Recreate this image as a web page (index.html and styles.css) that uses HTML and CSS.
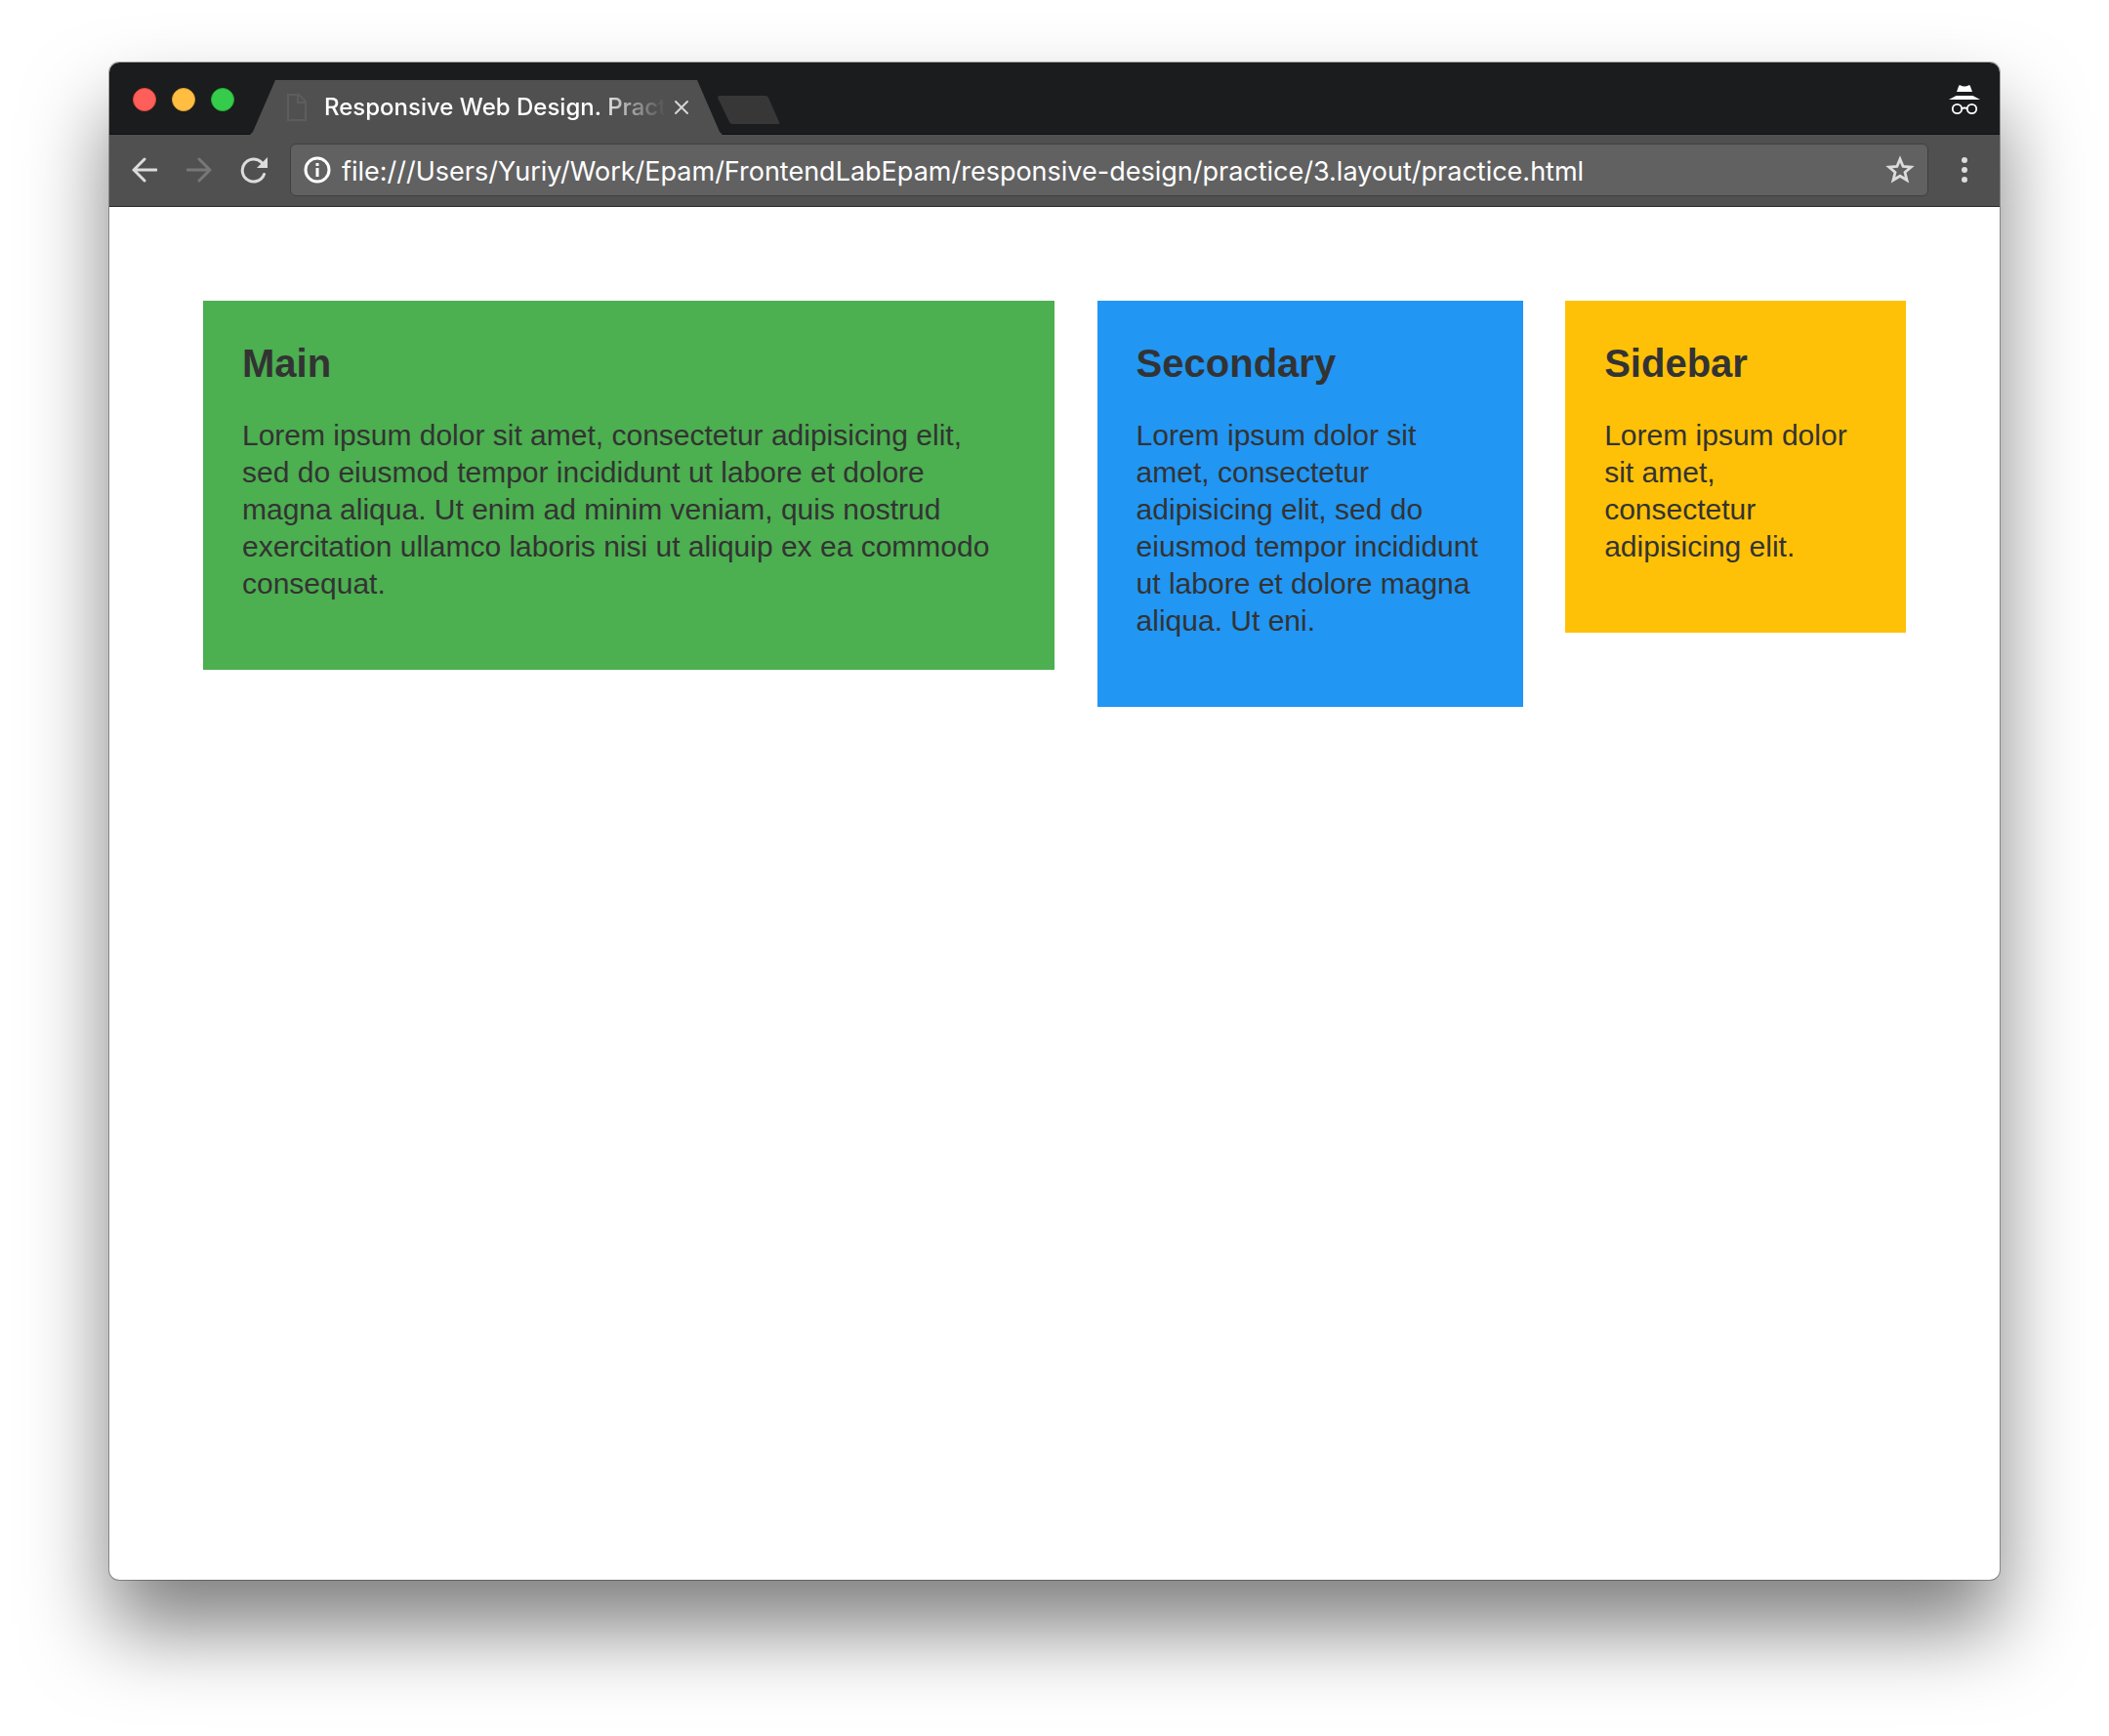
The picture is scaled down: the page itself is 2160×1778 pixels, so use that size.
FILE: index.html
```
<!DOCTYPE html>
<html lang="en">
<head>
<meta charset="utf-8">
<meta name="viewport" content="width=device-width, initial-scale=1">
<title>Responsive Web Design. Practice</title>
<link rel="stylesheet" href="styles.css">
</head>
<body>
<div class="window">
  <header class="titlebar">
    <div class="lights">
      <button class="light light-close" aria-label="Close window"></button>
      <button class="light light-minimize" aria-label="Minimize window"></button>
      <button class="light light-zoom" aria-label="Zoom window"></button>
    </div>
    <div class="tab">
      <svg class="tab-icon" width="20" height="28" viewBox="0 0 20 28" aria-hidden="true"><path d="M1 1H12L19 8V27H1ZM11 1V9H19" fill="none" stroke="#5d5d5d" stroke-width="2"/></svg>
      <span class="tab-title">Responsive Web Design. Practice</span>
      <button class="tab-close" aria-label="Close tab"><svg width="16" height="16" viewBox="0 0 16 16"><path d="M2 2L14 14M14 2L2 14" stroke="#d6d6d6" stroke-width="2" stroke-linecap="round"/></svg></button>
    </div>
    <button class="new-tab" aria-label="New tab"><svg width="64" height="30" viewBox="0 0 64 30"><path d="M2 0H49Q51 0 52 2L63 27Q64 29 62 29H15Q13 29 12 27L0 2Q0 0 2 0Z" fill="#373737"/></svg></button>
    <svg class="incognito" width="32" height="30" viewBox="0 0 32 30" role="img" aria-label="Incognito">
      <path d="M8 7L10.300 0.600Q10.600 0 11.500 0.200Q16 2.600 20.500 0.200Q21.400 0 21.700 0.600L24 7ZM0 15L7.500 11H24.500L32 15Z" fill="#fff"/>
      <circle cx="8.500" cy="24.500" r="4.700" fill="none" stroke="#fff" stroke-width="1.800"/><circle cx="23.500" cy="24.500" r="4.700" fill="none" stroke="#fff" stroke-width="1.800"/>
      <path d="M13 24.500Q16 22.500 19 24.500" fill="none" stroke="#fff" stroke-width="1.800"/>
    </svg>
  </header>
  <nav class="toolbar">
    <div class="nav-buttons">
      <button class="tool" aria-label="Back"><svg width="26" height="26" viewBox="0 0 26 26"><path d="M25 13H2M13 2L2 13L13 24" fill="none" stroke="#dcdcdc" stroke-width="3" stroke-linecap="round"/></svg></button>
      <button class="tool" aria-label="Forward" disabled><svg width="26" height="26" viewBox="0 0 26 26"><path d="M1 13H24M13 2L24 13L13 24" fill="none" stroke="#777" stroke-width="3" stroke-linecap="round"/></svg></button>
      <button class="tool" aria-label="Reload"><svg width="28" height="28" viewBox="0 0 28 28"><path d="M22 6.500A11.500 11.500 0 1 0 24.500 18.500" fill="none" stroke="#dcdcdc" stroke-width="3" stroke-linecap="round"/><path d="M28 1V12H17Z" fill="#dcdcdc"/></svg></button>
    </div>
    <form class="address">
      <svg width="28" height="28" viewBox="0 0 28 28" aria-hidden="true"><circle cx="14" cy="14" r="12" fill="none" stroke="#fff" stroke-width="3"/><path d="M12.500 7H15.500V10H12.500ZM12.500 12H15.500V21H12.500Z" fill="#fff"/></svg>
      <input class="url" type="text" aria-label="Address" value="file:///Users/Yuriy/Work/Epam/FrontendLabEpam/responsive-design/practice/3.layout/practice.html">
      <button class="star" type="button" aria-label="Bookmark this page"><svg width="30" height="30" viewBox="0 0 30 30"><path d="M15 4L18.100 11.500L26.200 12.200L20 17.500L22 25.500L15 21.200L8 25.500L10 17.500L3.800 12.200L11.900 11.500Z" fill="none" stroke="#dcdcdc" stroke-width="2.800"/></svg></button>
    </form>
    <button class="tool" aria-label="Menu"><svg width="6" height="26" viewBox="0 0 6 26"><circle cx="3" cy="3" r="3"/><circle cx="3" cy="13" r="3"/><circle cx="3" cy="23" r="3"/></svg></button>
  </nav>
  <main class="layout">
    <section class="box box-main">
      <h2>Main</h2>
      <p>Lorem ipsum dolor sit amet, consectetur adipisicing elit, sed do eiusmod tempor incididunt ut labore et dolore magna aliqua. Ut enim ad minim veniam, quis nostrud exercitation ullamco laboris nisi ut aliquip ex ea commodo consequat.</p>
    </section>
    <section class="box box-secondary">
      <h2>Secondary</h2>
      <p>Lorem ipsum dolor sit amet, consectetur adipisicing elit, sed do eiusmod tempor incididunt ut labore et dolore magna aliqua. Ut eni.</p>
    </section>
    <aside class="box box-sidebar">
      <h2>Sidebar</h2>
      <p>Lorem ipsum dolor sit amet, consectetur adipisicing elit.</p>
    </aside>
  </main>
</div>
</body>
</html>
```
FILE: styles.css
```
* {
  box-sizing: border-box;
}

body {
  display: flex;
  min-height: 100vh;
  margin: 0;
  padding: 64px 112px 160px;
  background: #fff;
  font-family: "Liberation Sans", Arial, sans-serif;
}

button {
  display: flex;
  align-items: center;
  justify-content: center;
  margin: 0;
  padding: 0;
  border: 0;
  background: none;
}

svg {
  display: block;
  flex: none;
}

.window {
  display: flex;
  flex: 1;
  flex-direction: column;
  min-width: 0;
  border-radius: 10px;
  background: #fff;
  box-shadow: 0 0 0 1px rgba(0, 0, 0, 0.3), 0 50px 84px rgba(0, 0, 0, 0.5);
}

.titlebar {
  display: flex;
  align-items: center;
  height: 74px;
  padding: 2px 20px 0 24px;
  border-radius: 10px 10px 0 0;
  background: linear-gradient(#1b1c1d 73px, #111 73px);
}

.lights {
  display: flex;
  gap: 16px;
  width: 120px;
}

.light {
  width: 24px;
  height: 24px;
  border: 1px solid;
  border-radius: 50%;
}

.light-close {
  border-color: #e2463f;
  background: #ff5f5a;
}

.light-minimize {
  border-color: #dfa033;
  background: #ffbe41;
}

.light-zoom {
  border-color: #25ac36;
  background: #35cc4b;
}

.tab {
  display: flex;
  align-items: center;
  align-self: flex-end;
  width: 484px;
  height: 56px;
  padding: 0 34px 0 38px;
  background: #505050;
  clip-path: polygon(0 100%, 3px 53px, 26px 0, 458px 0, 481px 53px, 100% 100%);
}

.tab-title {
  flex: 1;
  min-width: 0;
  margin: 0 8px 0 18px;
  overflow: hidden;
  color: #fff;
  font: 500 24px/32px Inter, sans-serif;
  white-space: nowrap;
  -webkit-mask-image: linear-gradient(to left, transparent, #000 72px);
  mask-image: linear-gradient(to left, transparent, #000 72px);
}

.new-tab {
  align-self: flex-end;
  height: 30px;
  margin: 0 0 10px -5px;
}

.incognito {
  margin-left: auto;
}

.toolbar {
  display: flex;
  gap: 9px;
  height: 74px;
  padding: 9px 8px 10px;
  border-bottom: 1px solid #2b2b2b;
  background: #505050;
}

.nav-buttons {
  display: flex;
}

.tool {
  width: 56px;
  fill: #dcdcdc;
}

.address {
  display: flex;
  flex: 1;
  align-items: center;
  min-width: 0;
  padding: 0 13px;
  border: 1px solid #3f3f3f;
  border-radius: 6px;
  background: #616161;
}

.url {
  flex: 1;
  min-width: 0;
  height: 40px;
  margin: 0 12px 0 11px;
  padding: 2px 0 0;
  border: 0;
  outline: 0;
  background: none;
  color: #fff;
  font: 400 27px/38px Inter, sans-serif;
}

.layout {
  display: flex;
  align-items: flex-start;
  justify-content: space-between;
  padding: 96px;
  color: #333;
}

.box {
  padding: 40px;
}

.box h2 {
  margin: 0 0 31px;
  font-size: 40px;
  line-height: 48px;
}

.box p {
  margin: 0 0 29px;
  font-size: 30px;
  line-height: 38px;
}

.box-main {
  width: 50%;
  background: #4caf50;
}

.box-secondary {
  width: 25%;
  background: #2196f3;
}

.box-sidebar {
  width: 20%;
  background: #ffc107;
}
```
